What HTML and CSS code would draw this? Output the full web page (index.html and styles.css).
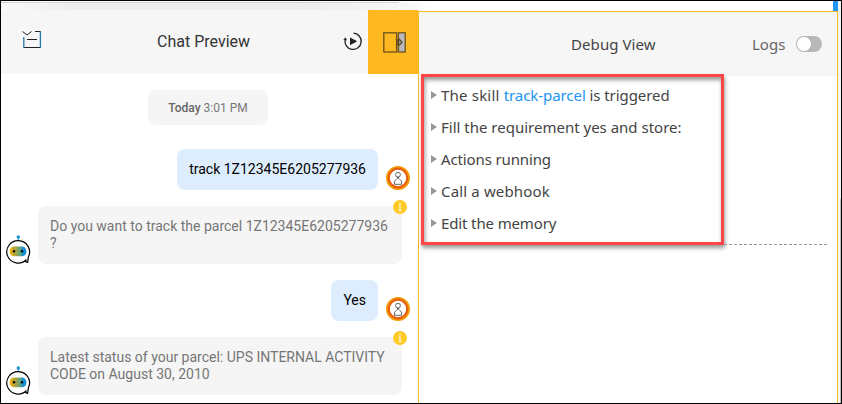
FILE: index.html
```html
<!DOCTYPE html>
<html lang="en">
<head>
<meta charset="utf-8">
<title>Chat Preview</title>
<link rel="stylesheet" href="styles.css">
</head>
<body>
<svg class="defs" width="0" height="0">
  <defs>
    <linearGradient id="visor"><stop offset="0" stop-color="#ffb000"/><stop offset=".32" stop-color="#b0a53c"/><stop offset=".65" stop-color="#5aa184"/><stop offset=".8" stop-color="#168fd3"/><stop offset="1" stop-color="#078fe5"/></linearGradient>
    <symbol id="bot" viewBox="0 0 26 29">
      <path d="M12.3 2v3" stroke="#168fd3" stroke-width="1"/>
      <circle cx="12.3" cy="2" r="1.7" fill="#168fd3"/>
      <path d="M20.5 24.5A11.4 11.2 0 1 1 22.4 21.8L21.6 27.4L18.6 26.1" fill="#fff" stroke="#000" stroke-width="1.2"/>
      <rect x="3.7" y="11.5" width="16.7" height="9.8" rx="4.6" fill="url(#visor)"/>
      <circle cx="8" cy="16.2" r="1.2"/><circle cx="16" cy="16.2" r="1.2"/>
    </symbol>
    <symbol id="user" viewBox="0 0 24 24">
      <circle cx="12" cy="12" r="11" fill="#fff" stroke="#f39a00" stroke-width="2"/>
      <circle cx="12" cy="12" r="9.3" fill="#fff" stroke="#e95d0a" stroke-width="2.2"/>
      <circle cx="12" cy="8.7" r="2.4" fill="none" stroke="#555" stroke-width=".9"/>
      <path d="M10.7 10.8L13 12.6L15.5 15.2V18.3H8.5V15.2L11 12.6L13.3 10.8" fill="none" stroke="#555" stroke-width=".9"/>
    </symbol>
    <symbol id="info" viewBox="0 0 14 14">
      <circle cx="7" cy="7" r="7" fill="#ffc926"/>
      <path d="M7 2.8v1.7M6 6h1v4.2M5.7 10.6h2.8" fill="none" stroke="#fff3c8" stroke-width="1.4"/>
    </symbol>
  </defs>
</svg>
<div class="frame">
  <section class="chat">
    <div class="topstrip"></div>
    <header class="chat-head">
      <svg class="checklist" width="20" height="19" viewBox="0 0 20 19" fill="none" stroke="#222">
        <path d="M.5 1.5L5 5L9.5 1.5M13 1.5H18M5 9.5H15"/><path d="M2 17.5H19"/><path d="M1.8 7V18M18.4 1V18" stroke="#2475a6" stroke-width="1.3"/>
      </svg>
      <h1>Chat Preview</h1>
      <svg class="replay" width="20" height="19" viewBox="0 0 20 19" fill="none" stroke="#222" stroke-width="1.3">
        <path d="M10.5 1.2A8.1 8.1 0 1 1 2.2 7.5"/><path d="M.3 8L2.5 5.2L4 8.2Z" fill="#222" stroke="none"/><path d="M7 5.5V13.2L14.3 9.3Z" fill="#222" stroke="none"/>
      </svg>
      <button class="toggle-panel" aria-label="Toggle debug view">
        <svg width="23" height="21" viewBox="0 0 23 21" fill="none" stroke="#6c5117" stroke-width="1.3">
          <rect x=".8" y=".8" width="12.8" height="19.2"/><rect x="15.4" y=".8" width="6.8" height="19.2" fill="#b9b9bb"/><path d="M13 7l3 3.3l-3 3.3M16 7l3 3.3l-3 3.3" stroke="#554526"/>
        </svg>
      </button>
    </header>
    <main class="messages">
      <div class="date"><b>Today</b> 3:01 PM</div>
      <div class="row sent first"><p class="bubble">track 1Z12345E6205277936</p><svg class="user"><use href="#user"/></svg></div>
      <div class="row received"><svg class="bot"><use href="#bot"/></svg><div class="bubble">Do you want to track the parcel 1Z12345E6205277936<br>?<svg class="info"><use href="#info"/></svg></div></div>
      <div class="row sent"><p class="bubble">Yes</p><svg class="user"><use href="#user"/></svg></div>
      <div class="row received"><svg class="bot"><use href="#bot"/></svg><div class="bubble">Latest status of your parcel: UPS INTERNAL ACTIVITY<br>CODE on August 30, 2010<svg class="info"><use href="#info"/></svg></div></div>
    </main>
  </section>
  <section class="debug-col">
    <div class="debug-top"><i></i></div>
    <div class="debug">
      <header class="debug-head"><h2>Debug View</h2><label>Logs</label><span class="switch"></span></header>
      <div class="body">
        <ul class="steps">
          <li><span class="triggered"><span class="lead">The skill </span><a>track-parcel</a> is triggered</span></li>
          <li><span>Fill the requirement yes and store:</span></li>
          <li><span class="running">Actions running</span></li>
          <li><span class="webhook">Call a webhook</span></li>
          <li><span class="memory">Edit the memory</span></li>
        </ul>
        <div class="divider"></div>
      </div>
    </div>
  </section>
  <div class="scroll"><i></i></div>
</div>
</body>
</html>
```
FILE: styles.css
```css
* { box-sizing: border-box; }
body { margin: 0; background: #fff; font-family: Roboto, "Liberation Sans", sans-serif; }
h1, h2, p, ul { margin: 0; padding: 0; font-weight: 400; }
svg { display: block; flex: none; }
.defs { position: absolute; }
.frame { display: grid; grid-template-columns: 417px 420px 3px; width: 842px; height: 404px; border: 1px solid #000; overflow: hidden; }
.chat { min-width: 0; }
.topstrip { height: 9px; border-top: 1px solid #fff; background: linear-gradient(#d9cfdb, #d9cfdb) 0 0 / 398px 1px no-repeat, linear-gradient(90deg, #f9f9f9, #ededed 80px, #ededed 300px, #f8f8f8); }
.chat-head { display: flex; align-items: flex-start; height: 64px; background: #f6f6f6; }
.checklist { margin: 20px 0 0 21px; }
.chat-head h1 { width: 94px; margin: 22px 0 0 115px; font-size: 16px; line-height: 20px; color: #333; white-space: nowrap; }
.replay { margin: 22px 0 0 92px; }
.toggle-panel { display: flex; width: 50px; height: 64px; margin-left: auto; padding: 22px 0 0 15px; border: 0; background: #fdb91f; }
.messages { padding: 16px 8px 0 5px; font-size: 14px; line-height: 17px; }
.date { width: 120px; height: 35px; margin-left: 142px; padding-top: 1px; border-radius: 8px; background: #f5f5f5; color: #777; font-size: 12px; line-height: 35px; text-align: center; }
.date b { font-weight: 500; color: #666; }
.row { display: flex; align-items: flex-end; margin-top: 16px; }
.row.first { margin-top: 24px; }
.sent { justify-content: flex-end; gap: 8px; }
.bubble { border-radius: 8px; padding: 12px; white-space: nowrap; }
.sent .bubble { height: 41px; background: #deedfe; color: #000; }
.user { width: 24px; height: 24px; }
.received { gap: 6px; }
.received .bubble { position: relative; width: 364px; height: 58px; background: #f5f5f5; color: #757575; }
.bot { width: 26px; height: 29px; }
.info { position: absolute; top: -6px; right: -5px; width: 14px; height: 14px; }
.debug-col { font-family: "Noto Sans", sans-serif; }
.debug-top { display: flex; justify-content: flex-end; height: 10px; background: linear-gradient(90deg, #fafafa, #fff 10px); }
.debug-top i { width: 5px; background: #2196f3; }
.debug { height: 392px; border: 1px solid #fbb91f; border-bottom: 0; }
.debug-head { display: flex; align-items: center; height: 64px; padding-bottom: 1px; background: #f6f6f6; color: #444; font-size: 15px; }
.debug-head h2 { width: 85px; margin-left: 152px; font-size: 15px; letter-spacing: .08px; white-space: nowrap; }
.debug-head label { width: 33px; margin-left: 96px; color: #666; }
.switch { width: 26px; height: 16px; margin-left: 11px; border-radius: 8px; background: radial-gradient(circle at 8px 8px, #fff 6.5px, #b8b8b8 7.3px); }
.body { display: flex; align-items: flex-end; height: 171px; margin-top: -2px; }
.steps { width: 303px; height: 171px; margin-left: 2px; padding: 2px 0 0 7px; border: 3px solid #ff4545; box-shadow: 1px 3px 4px #0006, inset 1px 3px 4px #0006; list-style: none; color: #444; font-size: 15px; flex: none; }
.steps li { display: flex; align-items: center; height: 32px; white-space: nowrap; }
.steps li::before { content: ""; width: 6px; height: 8px; margin-right: 4px; background: #999; clip-path: polygon(0 0, 100% 50%, 0 100%); }
.steps a { color: #2196f3; }
.lead { letter-spacing: .2px; }
.triggered { letter-spacing: -.07px; }
.running, .memory { letter-spacing: -.13px; }
.webhook { letter-spacing: .15px; }
.divider { width: 105px; height: 1px; background: repeating-linear-gradient(90deg, #999 0 3px, transparent 3px 5px); }
.scroll { padding-top: 198px; background: #f4f4f4; }
.scroll i { display: block; width: 1px; height: 204px; margin-left: 2px; background: #c0c0c0; }
```
